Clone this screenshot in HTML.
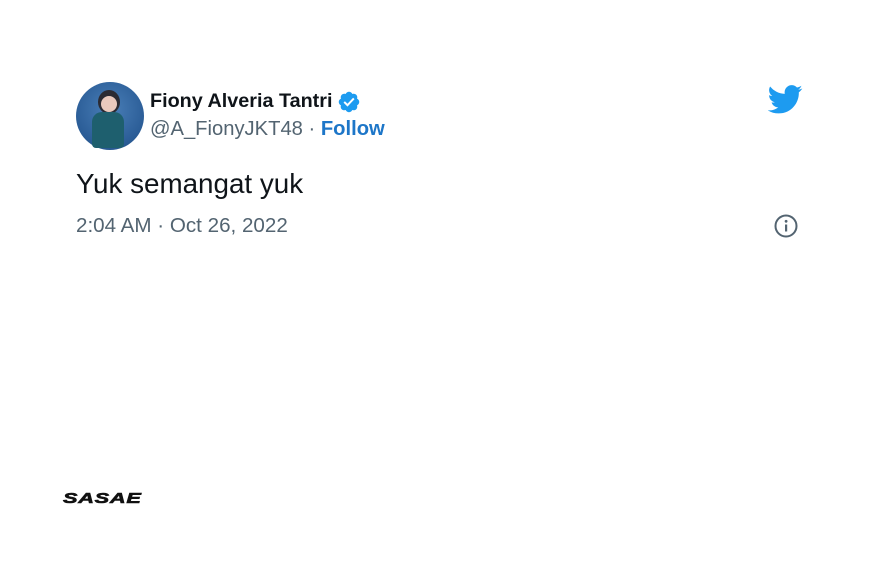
<!DOCTYPE html>
<html><head><style>
body{margin:0;width:875px;height:563px;background:#fff;font-family:"Liberation Sans",sans-serif;position:relative;overflow:hidden}
.a{position:absolute;white-space:nowrap}
</style></head><body>
<div class="a" style="left:76px;top:82px;width:68px;height:68px;border-radius:50%;background:radial-gradient(circle at 50% 40%,#4a7fb8,#2a5c96 70%,#1f4a7c)"></div>
<div class="a" style="left:98px;top:90px;width:22px;height:24px;border-radius:50%;background:#2b2b33"></div>
<div class="a" style="left:101px;top:96px;width:16px;height:16px;border-radius:50%;background:#e9c9bd"></div>
<div class="a" style="left:92px;top:112px;width:32px;height:36px;border-radius:10px 10px 4px 4px;background:#1e5f6e"></div>
<div class="a" style="left:150px;top:90px;font-weight:bold;font-size:19.8px;color:#0f1419">Fiony Alveria Tantri</div>
<svg class="a" style="left:337px;top:90px" width="24" height="24" viewBox="0 0 24 24"><path fill="#1d9bf0" d="M22.25 12c0-1.43-.88-2.67-2.19-3.34.46-1.39.2-2.9-.81-3.910s-2.52-1.27-3.91-.81c-.66-1.31-1.91-2.19-3.34-2.19s-2.670.88-3.33 2.19c-1.4-.46-2.91-.2-3.92.81s-1.26 2.52-.8 3.91C2.63 9.33 1.75 10.57 1.75 12s.88 2.67 2.19 3.34c-.46 1.39-.21 2.9.8 3.91s2.52 1.26 3.91.81c.67 1.31 1.91 2.19 3.34 2.19s2.68-.88 3.34-2.19c1.39.45 2.9.2 3.91-.81s1.27-2.52.81-3.91c1.31-.67 2.19-1.91 2.19-3.34z"/><path fill="#fff" d="M10.5 16.6l-4-4 1.4-1.4 2.6 2.6 5.6-6 1.45 1.37z"/></svg>
<div class="a" style="left:150px;top:118px;font-size:20.2px;color:#536471">@A_FionyJKT48 · <span style="color:#1d76c8;font-weight:bold">Follow</span></div>
<svg class="a" style="left:768px;top:85px" width="35" height="29" viewBox="0 0 24 20"><path fill="#1d9bf0" d="M23.6 2.4c-.9.4-1.8.6-2.8.8 1-.6 1.8-1.6 2.2-2.7-1 .6-2 1-3.1 1.2C19 .7 17.7.1 16.3.1c-2.7 0-4.9 2.2-4.9 4.9 0 .4 0 .8.1 1.1C7.4 5.9 3.8 4 1.4 1 1 1.7.7 2.6.7 3.5c0 1.7.9 3.2 2.2 4.1-.8 0-1.6-.2-2.2-.6v.1c0 2.4 1.7 4.4 3.9 4.8-.4.1-.8.2-1.300.2-.3 0-.6 0-.9-.1.6 2 2.4 3.4 4.6 3.4-1.7 1.3-3.8 2.1-6.1 2.1-.4 0-.8 0-1.2-.1 2.2 1.4 4.8 2.2 7.5 2.2 9.1 0 14-7.5 14-14v-.6c1-.7 1.8-1.6 2.4-2.6z"/></svg>
<div class="a" style="left:76px;top:168px;font-size:27.8px;color:#0f1419">Yuk semangat yuk</div>
<div class="a" style="left:76px;top:214px;font-size:20.6px;color:#536471">2:04 AM · Oct 26, 2022</div>
<svg class="a" style="left:773px;top:213px" width="26" height="26" viewBox="0 0 26 26"><circle cx="13" cy="13" r="10.5" fill="none" stroke="#536471" stroke-width="2"/><rect x="12" y="11.5" width="2.2" height="7" fill="#536471"/><circle cx="13.1" cy="8.3" r="1.4" fill="#536471"/></svg>
<div class="a" style="left:63px;top:490px;font-size:15px;font-weight:bold;font-style:italic;color:#111;letter-spacing:0.5px;transform:scaleX(1.45);transform-origin:left;-webkit-text-stroke:0.6px #111">SASAE</div>
</body></html>
